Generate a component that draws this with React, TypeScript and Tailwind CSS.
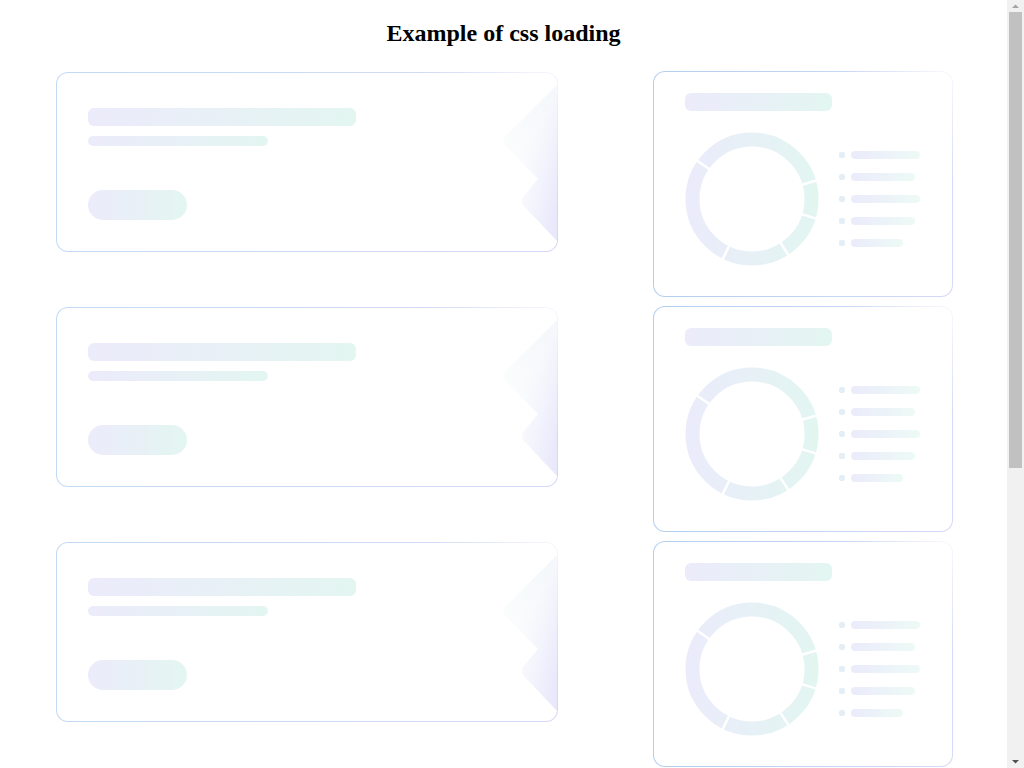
const legend = [69, 64, 69, 64, 52];
const gaps = [-16, 17, 57, 116, 215];

const borderBg =
  "bg-[radial-gradient(circle_at_100%_0%,rgba(255,255,255,0.8),rgba(255,255,255,0)_25%),linear-gradient(to_right,#c2daf3,#d0dbf5_70%,#d6d8f7)]";

const Bar = ({ className }: { className: string }) => (
  <div className={`bg-linear-to-r from-[#ecebfb] to-[#e3f6f1] ${className}`} />
);

const Arrow = () => (
  <svg
    className="absolute right-0 top-0"
    width="60"
    height="178"
    viewBox="0 0 60 178"
  >
    <defs>
      <linearGradient id="arrowFill" x1="0" y1="0" x2="0.7" y2="1">
        <stop offset="0" stopColor="#ebf8f3" />
        <stop offset="0.5" stopColor="#f5f7fc" />
        <stop offset="1" stopColor="#e8e8fb" />
      </linearGradient>
      <linearGradient id="arrowFade" x1="0" y1="0" x2="1" y2="0">
        <stop offset="0" stopColor="#ffffff" stopOpacity="0.75" />
        <stop offset="1" stopColor="#ffffff" stopOpacity="0" />
      </linearGradient>
    </defs>
    <path
      d="M60 12 L9 63 Q5 68 9 73 L41 106 L27 123 Q23 128 27 133 L60 168 Z"
      fill="url(#arrowFill)"
    />
    <path
      d="M60 12 L9 63 Q5 68 9 73 L41 106 L27 123 Q23 128 27 133 L60 168 Z"
      fill="url(#arrowFade)"
    />
  </svg>
);

const Donut = () => (
  <svg width="134" height="134" viewBox="0 0 134 134" className="shrink-0">
    <defs>
      <linearGradient id="ringFill" x1="0" y1="0" x2="134" y2="0" gradientUnits="userSpaceOnUse">
        <stop offset="0" stopColor="#ebebfb" />
        <stop offset="1" stopColor="#e2f6f1" />
      </linearGradient>
    </defs>
    <circle cx="67" cy="67" r="59.5" fill="none" stroke="url(#ringFill)" strokeWidth="14" />
    {gaps.map((a) => {
      const r = (a * Math.PI) / 180;
      return (
        <line
          key={a}
          x1={67 + Math.cos(r) * 50}
          y1={67 + Math.sin(r) * 50}
          x2={67 + Math.cos(r) * 69}
          y2={67 + Math.sin(r) * 69}
          stroke="#ffffff"
          strokeWidth="2.5"
        />
      );
    })}
  </svg>
);

const WideCard = () => (
  <div className={`mt-px w-[502px] h-[180px] rounded-xl p-px ${borderBg}`}>
    <div className="relative h-full overflow-hidden rounded-[11px] bg-white pl-[31px] pt-[35px]">
      <Bar className="w-[268px] h-[18px] rounded-md" />
      <Bar className="mt-[10px] w-[180px] h-[10px] rounded-full" />
      <Bar className="mt-[44px] w-[99px] h-[30px] rounded-full" />
      <Arrow />
    </div>
  </div>
);

const ChartCard = () => (
  <div className="w-[300px] h-[226px] rounded-xl p-px bg-[radial-gradient(circle_at_100%_0%,rgba(255,255,255,0.85),rgba(255,255,255,0)_30%),linear-gradient(to_right,#b3cff0,#c9d6f5_70%,#d6d9f7)]">
    <div className="h-full rounded-[11px] bg-white pl-[31px] pt-[21px]">
      <Bar className="w-[147px] h-[18px] rounded-md" />
      <div className="mt-[21px] flex items-center gap-[20px]">
        <Donut />
        <div className="flex flex-col gap-[14px]">
          {legend.map((w, i) => (
            <div key={i} className="flex items-center gap-[6px]">
              <div className="w-[6px] h-[6px] rounded-[2px] bg-[#e3eef6]" />
              <div
                className="h-2 rounded-full bg-linear-to-r from-[#ebebfb] to-[#edfaf6]"
                style={{ width: w }}
              />
            </div>
          ))}
        </div>
      </div>
    </div>
  </div>
);

const Scrollbar = () => (
  <div className="fixed right-0 top-0 flex h-screen w-[17px] flex-col items-center bg-[#f1f1f1]">
    <svg width="17" height="12" viewBox="0 0 17 12">
      <path d="M5 8 L8.5 4.5 L12 8 Z" fill="#a3a3a3" />
    </svg>
    <div className="h-[456px] w-[13px] bg-[#c1c1c1]" />
    <div className="flex-1" />
    <svg width="17" height="12" viewBox="0 0 17 12">
      <path d="M5 4 L8.5 7.5 L12 4 Z" fill="#505050" />
    </svg>
  </div>
);

export default function App() {
  return (
    <div className="min-h-screen w-[1007px] bg-white pb-4">
      <h2 className="pt-5 text-center text-[24px] leading-[27px] font-bold text-black font-['Liberation_Serif',serif]">
        Example of css loading
      </h2>
      <div className="mt-[24px] flex flex-col gap-[9px] pl-[56px]">
        {[0, 1, 2, 3, 4].map((i) => (
          <div key={i} className="flex items-start gap-[95px]">
            <WideCard />
            <ChartCard />
          </div>
        ))}
      </div>
      <Scrollbar />
    </div>
  );
}
